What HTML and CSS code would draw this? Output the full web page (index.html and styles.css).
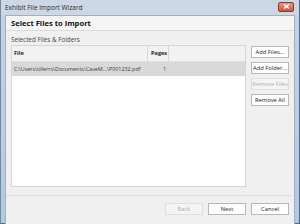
FILE: index.html
```html
<!DOCTYPE html>
<html>
<head>
<meta charset="utf-8">
<link rel="stylesheet" href="styles.css">
</head>
<body>
<div class="window">
  <div class="titlebar">
    <span class="title">Exhibit File Import Wizard</span>
    <span class="close"><svg width="7" height="5" viewBox="0 0 7 5"><path d="M1 0.5 L6 4.5 M6 0.5 L1 4.5" stroke="#fff" stroke-width="1.4"/></svg></span>
  </div>
  <div class="client">
    <div class="header">Select Files to Import</div>
    <div class="body">
      <div class="label">Selected Files &amp; Folders</div>
      <div class="main">
        <div class="table">
          <div class="row head">
            <div class="c-file">File</div>
            <div class="c-pages">Pages</div>
            <div class="c-rest"></div>
          </div>
          <div class="row sel">
            <div class="c-file">C:\Users\tillerrs\Documents\CaseM...\P001232.pdf</div>
            <div class="c-pages num">1</div>
            <div class="c-rest"></div>
          </div>
        </div>
        <div class="side">
          <button class="btn">Add Files...</button>
          <button class="btn">Add Folder...</button>
          <button class="btn disabled">Remove Files</button>
          <button class="btn">Remove All</button>
        </div>
      </div>
    </div>
    <div class="footer">
      <button class="btn wide disabled">Back</button>
      <button class="btn wide">Next</button>
      <button class="btn wide">Cancel</button>
    </div>
  </div>
</div>
</body>
</html>
```

FILE: styles.css
```css
html, body {
  margin: 0;
  padding: 0;
  width: 300px;
  height: 224px;
  overflow: hidden;
  font-family: "Open Sans", "Liberation Sans", sans-serif;
  font-size: 6.5px;
  color: #1e1e1e;
}
.window {
  width: 300px;
  height: 224px;
  box-sizing: border-box;
  display: flex;
  flex-direction: column;
  background: linear-gradient(#c6d3e1, #b7c8dc);
  padding: 0 4px 3px 4px;
  border-left: 1px solid #6f8aa8;
  border-right: 1px solid #3f6e9e;
  border-bottom: 1px solid #3f6e9e;
}
.titlebar {
  height: 15px;
  flex: none;
  display: flex;
  align-items: center;
  justify-content: space-between;
  background: #cdd8e4;
  margin: 0 -4px 0 -4px;
  padding: 0 5px 0 4px;
}
.title {
  font-size: 6.5px;
  color: #2a2a2a;
}
.close {
  width: 14px;
  height: 8px;
  margin-top: -2px;
  border-radius: 2px;
  background: linear-gradient(#e39a8a, #c8573f);
  border: 1px solid #8a3a2c;
  display: flex;
  align-items: center;
  justify-content: center;
}
.client {
  flex: 1;
  display: flex;
  flex-direction: column;
  background: #f0f0f0;
  border: 1px solid #9fb1c6;
}
.header {
  height: 14px;
  flex: none;
  background: #f5f5f5;
  border-bottom: 1px solid #dcdcdc;
  padding-left: 5px;
  font-weight: bold;
  font-size: 7.6px;
  line-height: 14px;
  color: #111;
}
.body {
  flex: 1;
  padding: 4px 5px 0 5px;
  display: flex;
  flex-direction: column;
}
.label {
  font-size: 6.3px;
  color: #444;
  height: 10px;
  line-height: 9px;
}
.main {
  display: flex;
  gap: 5px;
  height: 142px;
}
.table {
  width: 237px;
  box-sizing: border-box;
  background: #fff;
  border: 1px solid #d6d6d6;
}
.row {
  display: flex;
  height: 14px;
  line-height: 14px;
}
.head {
  height: 15px;
  line-height: 15px;
  background: #f2f2f2;
  border-bottom: 1px solid #e0e0e0;
  font-weight: bold;
  font-size: 5.6px;
}
.sel {
  background: #d9d9d9;
  font-size: 5.4px;
  color: #3a3a3a;
}
.c-file {
  width: 135px;
  padding-left: 2px;
  box-sizing: border-box;
  white-space: nowrap;
}
.c-pages {
  width: 22px;
  box-sizing: border-box;
  padding-left: 3px;
}
.head .c-pages {
  border-left: 1px solid #d8d8d8;
  border-right: 1px solid #d8d8d8;
}
.num {
  text-align: right;
  padding-right: 3px;
}
.c-rest { flex: 1; }
.side {
  display: flex;
  flex-direction: column;
  gap: 4px;
  padding-top: 1px;
}
.btn {
  width: 38px;
  height: 12px;
  box-sizing: border-box;
  padding: 0;
  margin: 0;
  font-family: inherit;
  font-size: 5.8px;
  color: #222;
  background: #fff;
  border: 1px solid #b8b8b8;
  border-radius: 0;
  line-height: 10px;
  white-space: nowrap;
}
.btn.disabled {
  color: #b0b0b0;
  background: #f4f4f4;
  border-color: #dedede;
}
.footer {
  flex: none;
  height: 25px;
  margin: 0 3px 0 0;
  border-top: 1px solid #dcdcdc;
  display: flex;
  justify-content: flex-end;
  align-items: flex-start;
  gap: 5px;
  padding: 7px 2px 0 0;
  margin-top: 8px;
}
.btn.wide { width: 38px; }
```
